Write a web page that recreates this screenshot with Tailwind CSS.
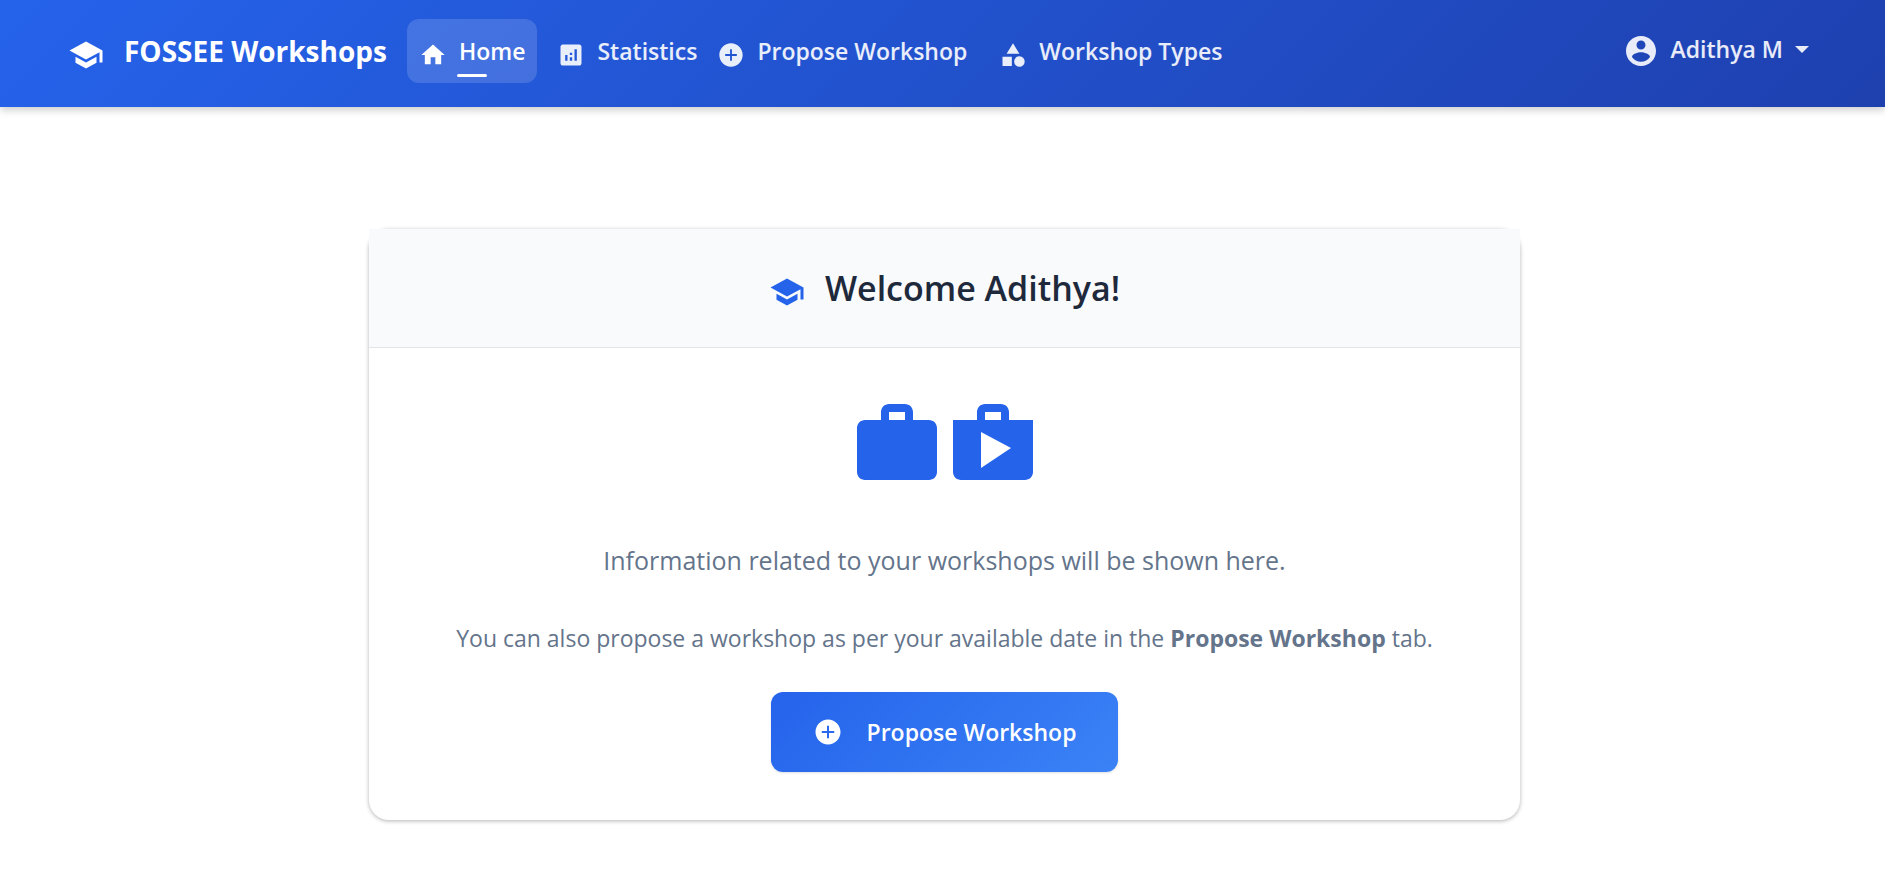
<!DOCTYPE html>
<html lang="en">
<head>
<meta charset="utf-8">
<meta name="viewport" content="width=device-width, initial-scale=1">
<title>FOSSEE Workshops</title>
<script src="https://cdn.jsdelivr.net/npm/@tailwindcss/browser@4"></script>
</head>
<body class="min-h-screen bg-white font-['Segoe_UI','Open_Sans','Noto_Sans',sans-serif] text-[#1e293b]">
<svg class="hidden" aria-hidden="true">
  <symbol id="school" viewBox="0 0 24 24"><path d="M5 13.18v4L12 21l7-3.82v-4L12 17l-7-3.82zM12 3L1 9l11 6 9-4.91V17h2V9L12 3z"/></symbol>
  <symbol id="add" viewBox="0 0 24 24"><path d="M12 2C6.48 2 2 6.48 2 12s4.48 10 10 10 10-4.48 10-10S17.52 2 12 2zm5 10.8h-4.2V17h-1.6v-4.2H7v-1.6h4.2V7h1.6v4.2H17z"/></symbol>
</svg>

<header class="flex flex-wrap items-center bg-linear-135 from-[#2563eb] to-[#1e40af] pt-[19px] pr-19 pb-6 pl-17 shadow-[0_3px_8px_rgba(0,0,0,0.2)]">
  <a href="#" class="flex items-center gap-5 text-[28px] leading-10 font-bold text-white">
    <svg class="mt-2 size-9 fill-current"><use href="#school"/></svg>
    FOSSEE Workshops
  </a>
  <nav class="ml-5 flex items-center text-[23px] leading-8 font-semibold text-white/90" aria-label="Main">
    <a href="#" aria-current="page" class="relative flex h-16 items-center gap-3 rounded-xl bg-white/15 px-3 text-white">
      <svg class="mt-2 size-7 fill-current" viewBox="0 0 24 24"><path d="M10 20v-6h4v6h5v-8h3L12 3 2 12h3v8z"/></svg>
      Home
      <span class="absolute bottom-1.5 left-1/2 h-[3px] w-[30px] -translate-x-1/2 rounded-sm bg-white"></span>
    </a>
    <a href="#" class="ml-2 flex h-16 items-center gap-3 px-3">
      <svg class="mt-2 size-7 fill-current" viewBox="0 0 24 24"><path d="M19 3H5c-1.1 0-2 .9-2 2v14c0 1.1.9 2 2 2h14c1.1 0 2-.9 2-2V5c0-1.1-.9-2-2-2zM9 17H7v-5h2v5zm4 0h-2v-3h2v3zm0-5h-2v-2h2v2zm4 5h-2V7h2v10z"/></svg>
      Statistics
    </a>
    <a href="#" class="flex h-16 items-center gap-3 pr-3 pl-2">
      <svg class="mt-2 size-7 fill-current"><use href="#add"/></svg>
      Propose Workshop
    </a>
    <a href="#" class="ml-2 flex h-16 items-center gap-3 px-3">
      <svg class="mt-2 size-7 fill-current" viewBox="0 0 24 24"><path d="M12 2l-5.5 9h11zM3 13.5h8v8H3z"/><circle cx="17.5" cy="17.5" r="4.5"/></svg>
      Workshop Types
    </a>
  </nav>
  <button type="button" class="mb-1 ml-auto flex items-center gap-3 text-[23px] leading-8 font-semibold text-white/90">
    <svg class="mt-1 size-9 fill-current" viewBox="0 0 24 24"><path d="M12 2C6.48 2 2 6.48 2 12s4.48 10 10 10 10-4.48 10-10S17.52 2 12 2zm0 3c1.66 0 3 1.34 3 3s-1.34 3-3 3-3-1.34-3-3 1.34-3 3-3zm0 14.2c-2.5 0-4.71-1.28-6-3.22.03-1.99 4-3.08 6-3.08 1.99 0 5.97 1.09 6 3.08-1.29 1.94-3.5 3.22-6 3.22z"/></svg>
    Adithya M
    <svg class="h-[7px] w-[14px] fill-current" viewBox="0 0 14 7"><path d="M0 0h14L7 7z"/></svg>
  </button>
</header>

<main class="pt-[122px] pr-4 pl-5">
  <section class="mx-auto max-w-[1151px] rounded-[20px] bg-white shadow-[0_1px_4px_rgba(0,0,0,0.3)]">
    <div class="flex items-center justify-center gap-5 border-b border-[#e2e6ea] bg-[#f8fafc] px-6 py-9">
      <svg class="mt-2 size-9 fill-[#2563eb]"><use href="#school"/></svg>
      <h1 class="text-[34px] leading-[46px] font-semibold">Welcome Adithya!</h1>
    </div>
    <div class="flex flex-col items-center px-6 pt-12 pb-12 text-center text-[#64748b]">
      <div class="flex fill-[#2563eb]">
        <svg class="size-24" viewBox="0 0 24 24"><path d="M16 6V4c0-1.11-.89-2-2-2h-4c-1.11 0-2 .89-2 2v2H4c-1.11 0-2 .89-2 2v11c0 1.11.89 2 2 2h16c1.11 0 2-.89 2-2V8c0-1.11-.89-2-2-2h-4zm-6-2h4v2h-4V4z"/></svg>
        <svg class="size-24" viewBox="0 0 24 24"><path d="M16 6V4c0-1.11-.89-2-2-2h-4c-1.11 0-2 .89-2 2v2H2v13c0 1.11.89 2 2 2h16c1.11 0 2-.89 2-2V6h-6zm-6-2h4v2h-4V4zM9 18V9l7.5 4z"/></svg>
      </div>
      <p class="mt-12 text-[25px] leading-10">Information related to your workshops will be shown here.</p>
      <p class="mt-10 text-[23px] leading-9">You can also propose a workshop as per your available date in the <strong class="font-bold">Propose Workshop</strong> tab.</p>
      <button type="button" class="mt-9 flex h-20 items-center gap-6 rounded-xl bg-linear-135 from-[#2563eb] to-[#3b82f6] px-[42px] text-[23px] leading-8 font-semibold text-white shadow-sm">
        <svg class="size-[30px] fill-current"><use href="#add"/></svg>
        Propose Workshop
      </button>
    </div>
  </section>
</main>
</body>
</html>
